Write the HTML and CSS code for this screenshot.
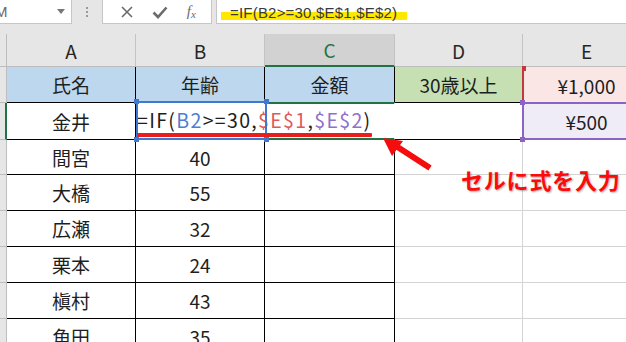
FILE: index.html
```html
<!DOCTYPE html>
<html lang="ja">
<head>
<meta charset="utf-8">
<link rel="stylesheet" href="styles.css">
</head>
<body>
<div class="app">
  <div class="fbar">
    <div class="namebox"><span class="nb-text">M</span><span class="caret"></span></div>
    <div class="grip"><i></i><i></i><i></i></div>
    <div class="fbtns">
      <svg class="ico" width="14" height="14" viewBox="0 0 14 14"><path d="M2 2 L12 12 M12 2 L2 12" stroke="#6b6b6b" stroke-width="1.6" fill="none"/></svg>
      <svg class="ico" width="16" height="14" viewBox="0 0 16 14"><path d="M1.5 7.5 L6 12 L14.5 2.5" stroke="#6b6b6b" stroke-width="2.6" fill="none"/></svg>
      <span class="fx">f<sub>x</sub></span>
    </div>
    <div class="finput"><span class="hl">=IF(B2&gt;=30,$E$1,$E$2)</span></div>
  </div>

  <div class="sheet">
    <div class="grid">
      <div class="corner"></div>
      <div class="ch">A</div>
      <div class="ch">B</div>
      <div class="ch sel">C</div>
      <div class="ch">D</div>
      <div class="ch">E</div>

      <div class="rh"></div>
      <div class="c t blue">氏名</div>
      <div class="c t blue">年齢</div>
      <div class="c t blue">金額</div>
      <div class="c t green">30歳以上</div>
      <div class="c pink">¥1,000</div>

      <div class="rh act"></div>
      <div class="c t">金井</div>
      <div class="c t nr edit"><span class="formula">=IF(<span class="rb">B2</span>&gt;=30,<span class="rr">$E$1</span>,<span class="rp">$E$2</span>)</span></div>
      <div class="c t nr active"></div>
      <div class="c t"></div>
      <div class="c lav">¥500</div>

      <div class="rh"></div><div class="c t">間宮</div><div class="c t">40</div><div class="c t"></div><div class="c"></div><div class="c"></div>
      <div class="rh"></div><div class="c t">大橋</div><div class="c t">55</div><div class="c t"></div><div class="c"></div><div class="c"></div>
      <div class="rh"></div><div class="c t">広瀬</div><div class="c t">32</div><div class="c t"></div><div class="c"></div><div class="c"></div>
      <div class="rh"></div><div class="c t">栗本</div><div class="c t">24</div><div class="c t"></div><div class="c"></div><div class="c"></div>
      <div class="rh"></div><div class="c t">槇村</div><div class="c t">43</div><div class="c t"></div><div class="c"></div><div class="c"></div>
      <div class="rh"></div><div class="c t">角田</div><div class="c t">35</div><div class="c t"></div><div class="c"></div><div class="c"></div>
    </div>

    <div class="refbox ref-b"><i class="h tl"></i><i class="h tr"></i><i class="h bl"></i><i class="h br"></i></div>
    <div class="refbox ref-e1"><i class="h tl"></i></div>
    <div class="refbox ref-e2"><i class="h tl"></i><i class="h bl"></i></div>
    <div class="underline"></div>
    <svg class="arrow" width="70" height="45" viewBox="370 132 70 45">
      <path d="M430 168 L396 146" stroke="#f50d0d" stroke-width="6" fill="none"/>
      <path d="M383 138 L403 141 L392 156 Z" fill="#f50d0d"/>
    </svg>
    <div class="note">セルに式を入力</div>
  </div>
</div>
</body>
</html>
```
FILE: styles.css
```css
* { box-sizing: border-box; }
html, body { margin: 0; padding: 0; }
body {
  width: 626px;
  height: 342px;
  overflow: hidden;
  background: #fff;
  font-family: "Noto Sans CJK JP", "Noto Sans", sans-serif;
}
.app { width: 626px; height: 342px; overflow: hidden; }

/* formula bar */
.fbar {
  height: 34px;
  background: #e6e6e6;
  display: flex;
  align-items: flex-start;
}
.namebox {
  width: 72px;
  height: 24px;
  background: #fff;
  border-right: 1px solid #c6c6c6;
  border-bottom: 1px solid #c6c6c6;
  display: flex;
  align-items: center;
  justify-content: space-between;
  padding-right: 6px;
  overflow: hidden;
}
.nb-text {
  margin-left: -5px;
  font-family: "Liberation Sans", sans-serif;
  font-size: 15px;
  color: #6a6a6a;
}
.caret {
  width: 0; height: 0;
  border-left: 4px solid transparent;
  border-right: 4px solid transparent;
  border-top: 5px solid #777;
}
.grip {
  width: 30px;
  height: 24px;
  display: flex;
  flex-direction: column;
  align-items: center;
  justify-content: center;
  gap: 2px;
}
.grip i { width: 2px; height: 2px; background: #9a9a9a; display: block; }
.fbtns {
  width: 110px;
  height: 24px;
  background: #fff;
  border: 1px solid #c6c6c6;
  border-top: none;
  display: flex;
  align-items: center;
  justify-content: space-around;
  padding: 0 6px 0 8px;
}
.ico { display: block; }
.fx {
  font-family: "Liberation Serif", serif;
  font-style: italic;
  font-size: 15px;
  color: #6b6b6b;
  line-height: 1;
}
.fx sub { font-size: 11px; vertical-align: -2px; }
.finput {
  margin-left: 4px;
  flex: 1;
  height: 24px;
  background: #fff;
  border-left: 1px solid #c6c6c6;
  border-bottom: 1px solid #c6c6c6;
  padding-left: 4px;
  display: flex;
  align-items: center;
}
.hl {
  font-family: "Liberation Sans", sans-serif;
  font-size: 15px;
  letter-spacing: 0.2px;
  color: #3a3a3a;
  padding: 0 10px 0 9px;
  background: linear-gradient(to bottom, transparent 0, transparent 40%, #ffe800 40%, #ffe800 100%);
  line-height: 14px;
  margin-top: 2px;
}

/* sheet */
.sheet { position: relative; }
.grid {
  display: grid;
  grid-template-columns: 7px 129px 129px 130px 128px 128px;
  grid-template-rows: 33px 36px 37px 35px 36px 36px 36px 36px 36px;
}
.corner {
  background: #e6e6e6;
  border-right: 1px solid #bdbdbd;
  border-bottom: 1px solid #bdbdbd;
}
.ch {
  background: #e6e6e6;
  border-right: 1px solid #c4c4c4;
  border-bottom: 1px solid #bdbdbd;
  display: flex;
  align-items: center;
  justify-content: center;
  font-size: 19px;
  color: #262626;
}
.ch.sel {
  background: #d2d2d2;
  color: #217346;
  border-bottom: 2px solid #217346;
}
.rh {
  background: #e6e6e6;
  border-right: 1px solid #bdbdbd;
  border-bottom: 1px solid #bdbdbd;
}
.rh.act { border-right: 2px solid #217346; }

.c {
  border-right: 1px solid #d4d4d4;
  border-bottom: 1px solid #d4d4d4;
  display: flex;
  align-items: center;
  justify-content: center;
  font-size: 19px;
  color: #1e1e1e;
  white-space: nowrap;
}
.c.t { border-right-color: #000; border-bottom-color: #000; }
.c.nr { border-right-color: transparent; }
.c.blue { background: #bdd7ee; }
.c.green { background: #c6e0b4; }
.c.pink { background: #fbe6e6; border-bottom: none; }
.c.lav { background: #efebf7; }
.c.active {
  border-top: 2px solid #217346;
  border-bottom: 2px solid #217346;
  margin-top: -1px;
}
.c.edit {
  justify-content: flex-start;
  overflow: visible;
  position: relative;
  z-index: 2;
}
.formula {
  padding-left: 1px;
  font-size: 19.5px;
  letter-spacing: 1.35px;
  color: #1e1e1e;
  margin-top: -3px;
}
.rb { color: #4a7fd4; }
.rr { color: #e05a5a; }
.rp { color: #9070cc; }

/* reference highlight boxes */
.refbox { position: absolute; pointer-events: none; }
.refbox .h { position: absolute; width: 5px; height: 5px; display: block; }
.ref-b {
  left: 136px; top: 67px; width: 131px; height: 39px;
  border: 2px solid #3f78d0;
  z-index: 3;
}
.ref-b .h { background: #3f78d0; }
.h.tl { left: -4px; top: -4px; }
.h.tr { right: -4px; top: -4px; }
.h.bl { left: -4px; bottom: -4px; }
.h.br { right: -4px; bottom: -4px; }
.ref-e1 {
  left: 522px; top: 33px; width: 110px; height: 36px;
  border-left: 2px solid #c0393c;
  z-index: 3;
}
.ref-e1 .h { background: #c0393c; top: -1px; left: -2px; width: 4px; }
.ref-e2 {
  left: 522px; top: 68px; width: 110px; height: 38px;
  border: 2px solid #8a63c4;
  z-index: 3;
}
.ref-e2 .h { background: #8a63c4; }

.underline {
  position: absolute;
  left: 137px; top: 99px;
  width: 235px; height: 4px;
  background: #e81e1e;
  border-radius: 1px;
  z-index: 4;
}
.arrow {
  position: absolute;
  left: 370px; top: 98px;
  z-index: 5;
}
.note {
  position: absolute;
  left: 461px; top: 129px;
  font-size: 22px;
  font-weight: 700;
  color: #ff0a0a;
  letter-spacing: 0.8px;
  text-shadow: 1px 1px 2px rgba(0,0,0,0.35);
  white-space: nowrap;
  z-index: 5;
}
```
